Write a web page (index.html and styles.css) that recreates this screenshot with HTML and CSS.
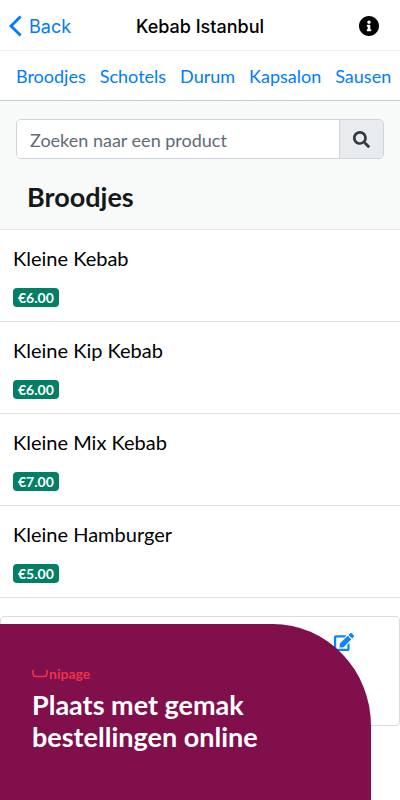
FILE: index.html
```html
<!DOCTYPE html>
<html lang="nl">
<head>
<meta charset="utf-8">
<meta name="viewport" content="width=device-width, initial-scale=1">
<title>Kebab Istanbul</title>
<link rel="stylesheet" href="styles.css">
</head>
<body>
<header class="topbar">
  <a class="back" href="#">
    <svg class="back-icon" viewBox="0 0 13 22" aria-hidden="true"><path d="M11.6 1.5 2 11l9.6 9.5" fill="none" stroke="currentColor" stroke-width="2.8"/></svg>
    Back
  </a>
  <h1 class="title">Kebab Istanbul</h1>
  <button class="info" type="button" aria-label="Informatie">
    <svg class="info-icon" viewBox="8 8 496 496" aria-hidden="true"><path fill="currentColor" d="M256 8C119.043 8 8 119.083 8 256c0 136.997 111.043 248 248 248s248-111.003 248-248C504 119.083 392.957 8 256 8zm0 110c23.196 0 42 18.804 42 42s-18.804 42-42 42-42-18.804-42-42 18.804-42 42-42zm56 254c0 6.627-5.373 12-12 12h-88c-6.627 0-12-5.373-12-12v-24c0-6.627 5.373-12 12-12h12v-64h-12c-6.627 0-12-5.373-12-12v-24c0-6.627 5.373-12 12-12h64c6.627 0 12 5.373 12 12v100h12c6.627 0 12 5.373 12 12v24z"/></svg>
  </button>
</header>
<nav class="categories">
  <a href="#broodjes">Broodjes</a>
  <a href="#schotels">Schotels</a>
  <a href="#durum">Durum</a>
  <a href="#kapsalon">Kapsalon</a>
  <a href="#sausen">Sausen</a>
</nav>
<main>
  <section class="intro" id="broodjes">
    <form class="search">
      <input class="search-input" type="text" placeholder="Zoeken naar een product" aria-label="Zoeken naar een product">
      <button class="search-button" type="button" aria-label="Zoeken">
        <svg class="search-icon" viewBox="0 0 512 512" aria-hidden="true"><path fill="currentColor" d="M505 442.7L405.3 343c-4.5-4.5-10.6-7-17-7H372c27.6-35.3 44-79.7 44-128C416 93.1 322.9 0 208 0S0 93.1 0 208s93.1 208 208 208c48.3 0 92.7-16.4 128-44v16.3c0 6.4 2.5 12.5 7 17l99.7 99.7c9.4 9.4 24.6 9.4 33.9 0l28.3-28.3c9.4-9.4 9.4-24.6.1-34zM208 336c-70.7 0-128-57.2-128-128 0-70.7 57.2-128 128-128 70.7 0 128 57.2 128 128 0 70.7-57.2 128-128 128z"/></svg>
      </button>
    </form>
    <h2 class="section-title">Broodjes</h2>
  </section>
  <ul class="products">
    <li class="product"><span class="name">Kleine Kebab</span><span class="price">€6.00</span></li>
    <li class="product"><span class="name">Kleine Kip Kebab</span><span class="price">€6.00</span></li>
    <li class="product"><span class="name">Kleine Mix Kebab</span><span class="price">€7.00</span></li>
    <li class="product"><span class="name">Kleine Hamburger</span><span class="price">€5.00</span></li>
  </ul>
  <section class="card">
    <button class="edit" type="button" aria-label="Bewerken">
      <svg class="edit-icon" viewBox="0 0 576 512" aria-hidden="true"><path fill="currentColor" d="M402.6 83.2l90.2 90.2c3.8 3.8 3.8 10 0 13.8L274.4 405.6l-92.8 10.3c-12.4 1.4-22.9-9.1-21.5-21.5l10.3-92.8L388.8 83.2c3.8-3.8 10-3.8 13.8 0zm162-22.9l-48.8-48.8c-15.2-15.2-39.9-15.2-55.2 0l-35.4 35.4c-3.8 3.8-3.8 10 0 13.8l90.2 90.2c3.8 3.8 10 3.8 13.8 0l35.4-35.4c15.2-15.3 15.2-40 0-55.2zM384 346.2V448H64V128h229.8c3.2 0 6.2-1.3 8.5-3.5l40-40c7.6-7.6 2.2-20.5-8.5-20.5H48C21.5 64 0 85.5 0 112v352c0 26.5 21.5 48 48 48h352c26.5 0 48-21.5 48-48V306.2c0-10.7-12.9-16-20.5-8.5l-40 40c-2.2 2.3-3.5 5.3-3.5 8.5z"/></svg>
    </button>
  </section>
</main>
<aside class="promo">
  <div class="brand">
    <svg class="brand-mark" viewBox="0 0 16 8" aria-hidden="true"><path d="M1 0v3.5Q1 6.5 4 6.5h8q3 0 3-3V0" fill="none" stroke="currentColor" stroke-width="1.5"/></svg>
    <span>nipage</span>
  </div>
  <p class="slogan">Plaats met gemak<br>bestellingen online</p>
</aside>
</body>
</html>
```
FILE: styles.css
```css
* {
  box-sizing: border-box;
}

body {
  position: relative;
  min-height: 100vh;
  margin: 0;
  background: #fff;
  color: #000;
  font-family: Lato, "Liberation Sans", sans-serif;
  overflow-x: hidden;
}

button {
  padding: 0;
  border: 0;
  background: none;
  color: inherit;
  font: inherit;
}

a {
  color: #007bff;
  text-decoration: none;
}

svg {
  display: block;
}

.topbar {
  display: grid;
  grid-template-columns: 1fr auto 1fr;
  align-items: center;
  height: 51px;
  padding: 2px 21px 0 9px;
  border-bottom: 1px solid #f0f1f2;
  font-family: Inter, "Liberation Sans", sans-serif;
}

.back {
  display: flex;
  align-items: center;
  gap: 7px;
  font-size: 18px;
}

.back-icon {
  width: 13px;
  height: 22px;
}

.title {
  margin: 0 0 0 12px;
  font-size: 18px;
  font-weight: 500;
}

.info {
  justify-self: end;
}

.info-icon {
  width: 20px;
  height: 20px;
}

.categories {
  display: flex;
  align-items: center;
  gap: 14px;
  height: 50px;
  padding: 0 16px;
  border-bottom: 1px solid #c8cacc;
  box-shadow: 0 1px 2px #e4e6e8;
  font-size: 18px;
  white-space: nowrap;
  overflow-x: clip;
}

.intro {
  padding: 18px 16px 0;
  border-bottom: 1px solid #e7e8e9;
  background: #f8faf9;
}

.search {
  display: flex;
  height: 40px;
  border: 1px solid #ced4da;
  border-radius: 5px;
  overflow: hidden;
}

.search-input {
  flex: 1;
  min-width: 0;
  padding: 2px 13px 0;
  border: 0;
  background: #fff;
  color: #495057;
  font: 18px Lato, "Liberation Sans", sans-serif;
}

.search-input::placeholder {
  color: #5f6b76;
  opacity: 1;
}

.search-button {
  display: flex;
  align-items: center;
  justify-content: center;
  width: 44px;
  border-left: 1px solid #ced4da;
  background: #e9ecef;
  color: #343a40;
}

.search-icon {
  width: 17px;
  height: 17px;
}

.section-title {
  margin: 0;
  padding: 22px 11px 16px;
  color: #15181b;
  font-size: 27px;
  line-height: 32px;
}

.products {
  margin: 0;
  padding: 0;
  list-style: none;
}

.product {
  display: flex;
  flex-direction: column;
  align-items: flex-start;
  gap: 18px;
  height: 92px;
  padding: 16px 13px 0;
  border-bottom: 1px solid #e2e3e4;
}

.name {
  font-size: 20px;
  line-height: 24px;
}

.price {
  padding: 1px 5px 0;
  border-radius: 4px;
  background: #037f66;
  color: #fff;
  font-size: 14px;
  font-weight: 700;
  line-height: 18px;
}

.card {
  display: flex;
  justify-content: flex-end;
  align-items: flex-start;
  height: 110px;
  margin-top: 18px;
  padding: 16px 45px;
  border: 1px solid #dcdcdc;
  border-radius: 4px;
  color: #0a84ff;
}

.edit-icon {
  width: 20px;
  height: 18px;
}

.promo {
  position: absolute;
  bottom: 0;
  left: 0;
  width: calc(100% - 29px);
  height: 176px;
  padding: 42px 32px 0;
  border-top-right-radius: 98px 102px;
  background: #800f4b;
  color: #fff;
}

.brand {
  display: flex;
  align-items: center;
  gap: 1px;
  color: #ed3348;
  font-size: 14px;
  font-weight: 700;
  line-height: 16px;
}

.brand-mark {
  width: 16px;
  height: 8px;
}

.slogan {
  margin: 7px 0 0;
  font-size: 27px;
  font-weight: 700;
  line-height: 32px;
}
```
